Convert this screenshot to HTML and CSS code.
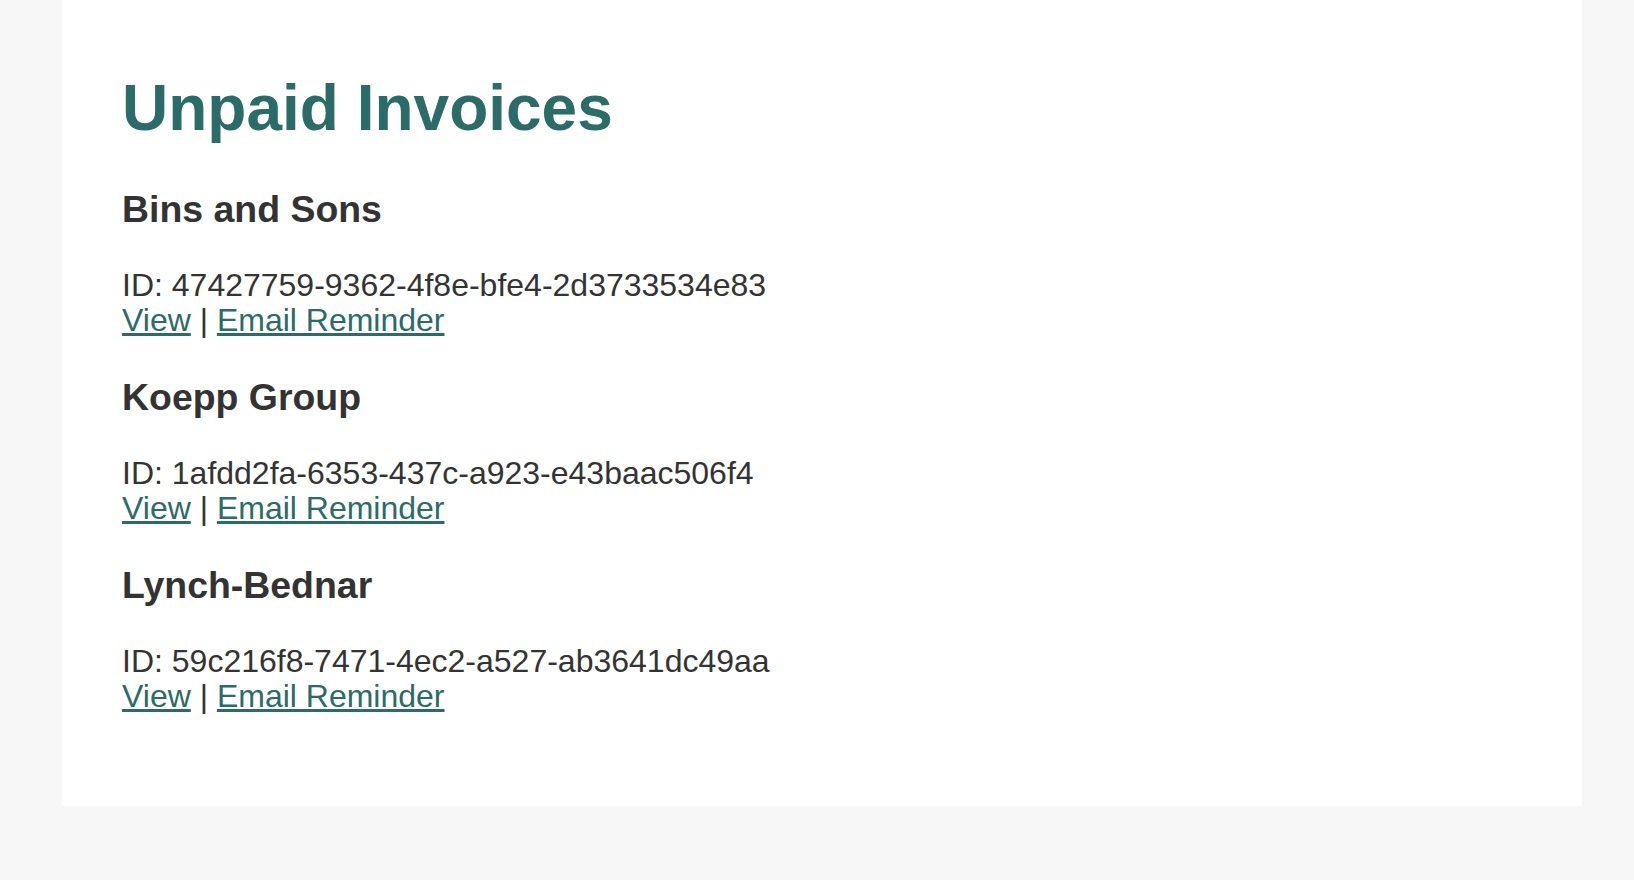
FILE: index.html
```
<!DOCTYPE html>
<html lang="en">
<head>
<meta charset="utf-8">
<title>Unpaid Invoices</title>
<link rel="stylesheet" href="styles.css">
</head>
<body>
<div class="container">
  <h1 class="title">Unpaid Invoices</h1>
  <div class="invoice">
    <h3 class="client">Bins and Sons</h3>
    <p class="details">ID: 47427759-9362-4f8e-bfe4-2d3733534e83<br><a href="#" class="link">View</a> | <a href="#" class="link">Email Reminder</a></p>
  </div>
  <div class="invoice">
    <h3 class="client">Koepp Group</h3>
    <p class="details">ID: 1afdd2fa-6353-437c-a923-e43baac506f4<br><a href="#" class="link">View</a> | <a href="#" class="link">Email Reminder</a></p>
  </div>
  <div class="invoice">
    <h3 class="client">Lynch-Bednar</h3>
    <p class="details">ID: 59c216f8-7471-4ec2-a527-ab3641dc49aa<br><a href="#" class="link">View</a> | <a href="#" class="link">Email Reminder</a></p>
  </div>
</div>
</body>
</html>
```
FILE: styles.css
```
html, body {
  margin: 0;
  padding: 0;
}
body {
  background: #f7f7f7;
  font-family: "Liberation Sans", Arial, Helvetica, sans-serif;
  font-size: 32px;
  color: #333333;
}
.container {
  box-sizing: border-box;
  width: 1520px;
  margin-left: 62px;
  background: #ffffff;
  padding: 28px 60px 60px;
  display: flow-root;
}
.title {
  font-size: 64px;
  font-weight: bold;
  color: #2b6b68;
  margin: 0.67em 0;
}
.client {
  font-size: 37.44px;
  font-weight: bold;
  margin: 1em 0;
}
.details {
  margin: 1em 0;
  line-height: 35px;
}
.link {
  color: #2b6b68;
  text-decoration: underline;
}
```
